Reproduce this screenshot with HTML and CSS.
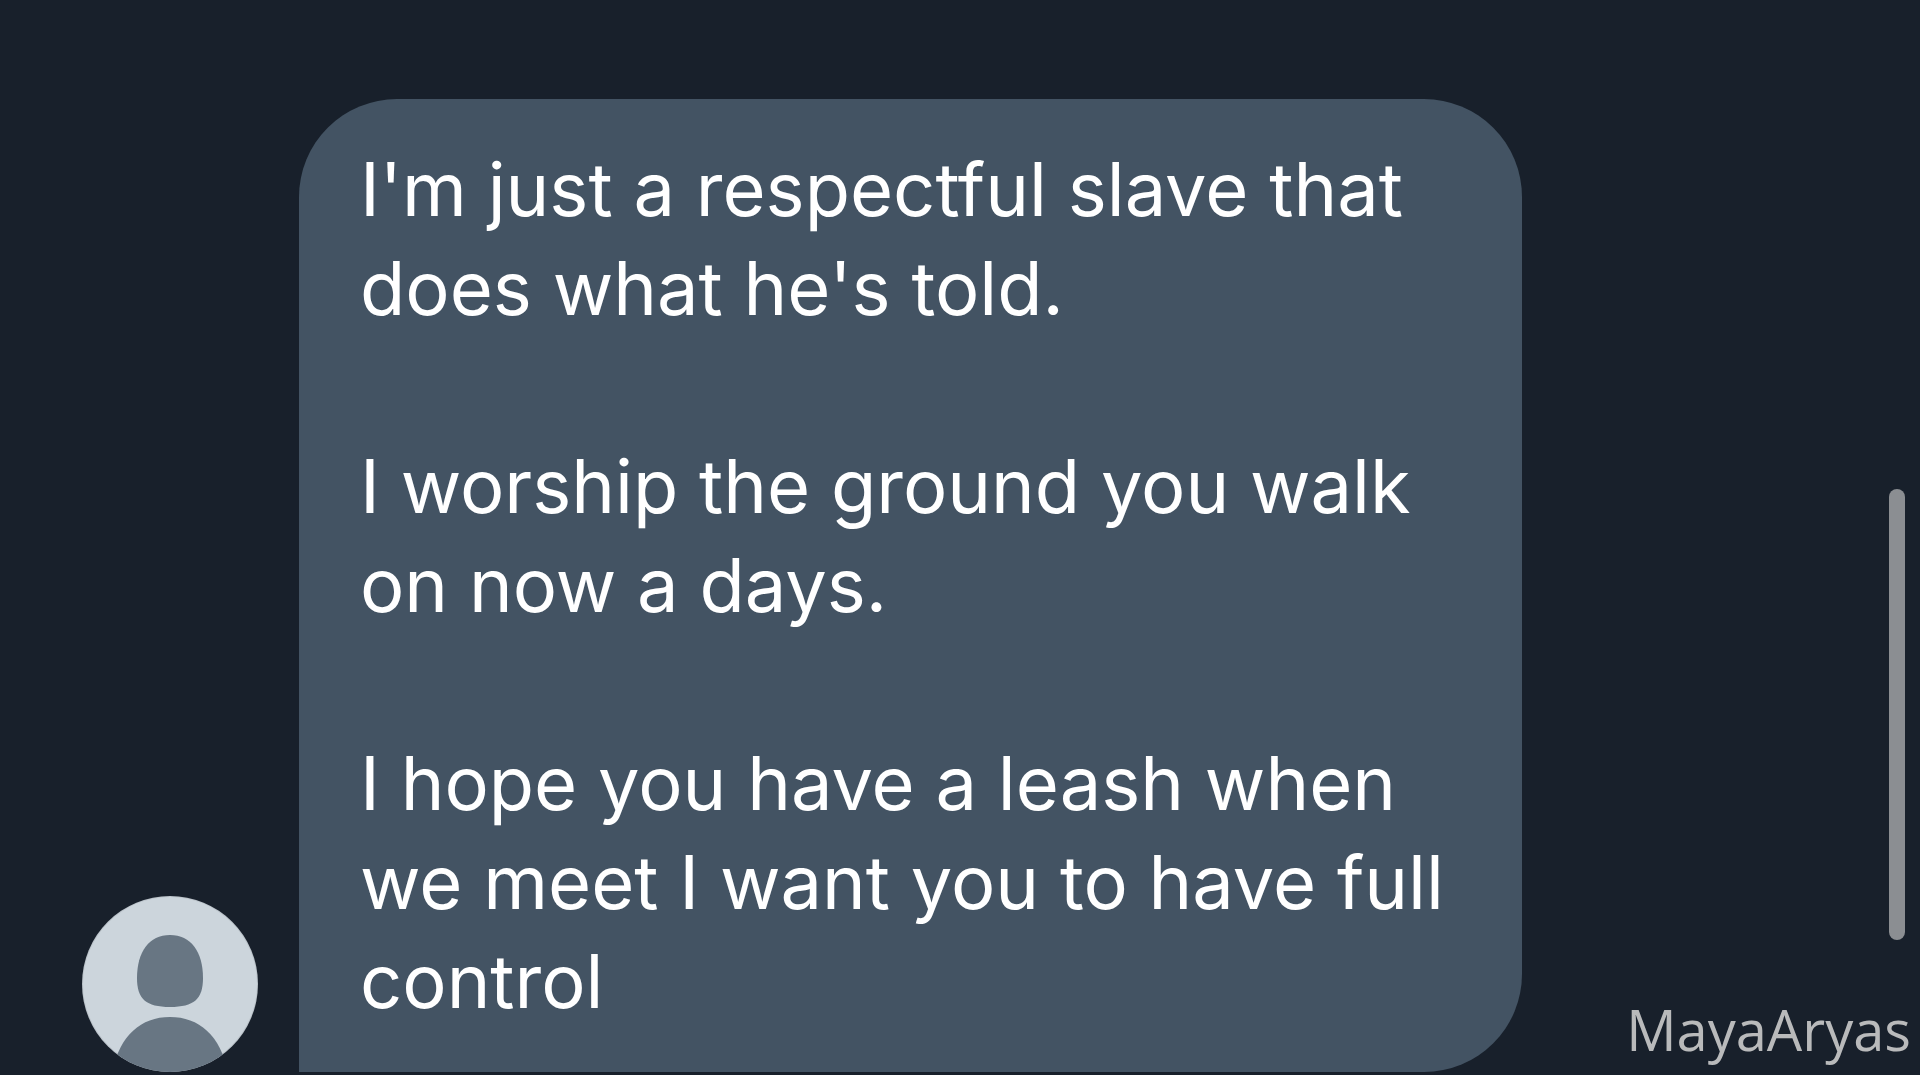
FILE: index.html
```html
<!DOCTYPE html>
<html lang="en">
<head>
<meta charset="utf-8">
<title>Messages</title>
<link rel="stylesheet" href="styles.css">
</head>
<body>
<main class="chat">
  <article class="message">
    <svg class="avatar" viewBox="0 0 176 176" role="img" aria-label="Profile picture">
      <defs><clipPath id="disc"><circle cx="88" cy="88" r="88"/></clipPath></defs>
      <circle cx="88" cy="88" r="88" fill="#bcc4cb"/>
      <circle cx="88" cy="88" r="87" fill="#ccd5dc"/>
      <g fill="#687683" clip-path="url(#disc)">
        <path d="M88 39C109 39 121 56 121 82C121 103 112 111 88 111C64 111 55 103 55 82C55 56 67 39 88 39Z"/>
        <path d="M30 176C38 139 59 121 88 121C117 121 138 139 146 176Z"/>
      </g>
    </svg>
    <div class="bubble">
      <p class="text">I'm just a respectful slave that<br>does what he's told.</p>
      <p class="text">I worship the ground you walk<br>on now a days.</p>
      <p class="text">I hope you have a leash when<br>we meet I want you to have full<br>control</p>
    </div>
  </article>
  <div class="scrollbar"></div>
  <span class="watermark">MayaAryas</span>
</main>
</body>
</html>
```
FILE: styles.css
```css
* { box-sizing: border-box; }
body { margin: 0; background: #18202b; color: #fff; }
.chat { position: relative; min-height: 100vh; padding: 99px 398px 3px 82px; overflow: hidden; }
.message { display: flex; align-items: flex-end; gap: 41px; }
.avatar { flex: none; width: 176px; height: 176px; }
.bubble { flex: 1; padding: 41px 61px; border-radius: 98px 98px 98px 0; background: #435363; }
.text { margin: 0 0 99px; font: 400 74px/99px Inter, "Liberation Sans", sans-serif; font-variant-ligatures: none; white-space: nowrap; }
.text:last-child { margin-bottom: 0; }
.scrollbar { position: absolute; top: 489px; right: 15px; width: 16px; height: 451px; border-radius: 8px; background: #8b8e92; }
.watermark { position: absolute; right: 9px; bottom: 6px; color: #b9babb; font: 400 56px/80px "Open Sans", "Noto Sans", sans-serif; }
```
